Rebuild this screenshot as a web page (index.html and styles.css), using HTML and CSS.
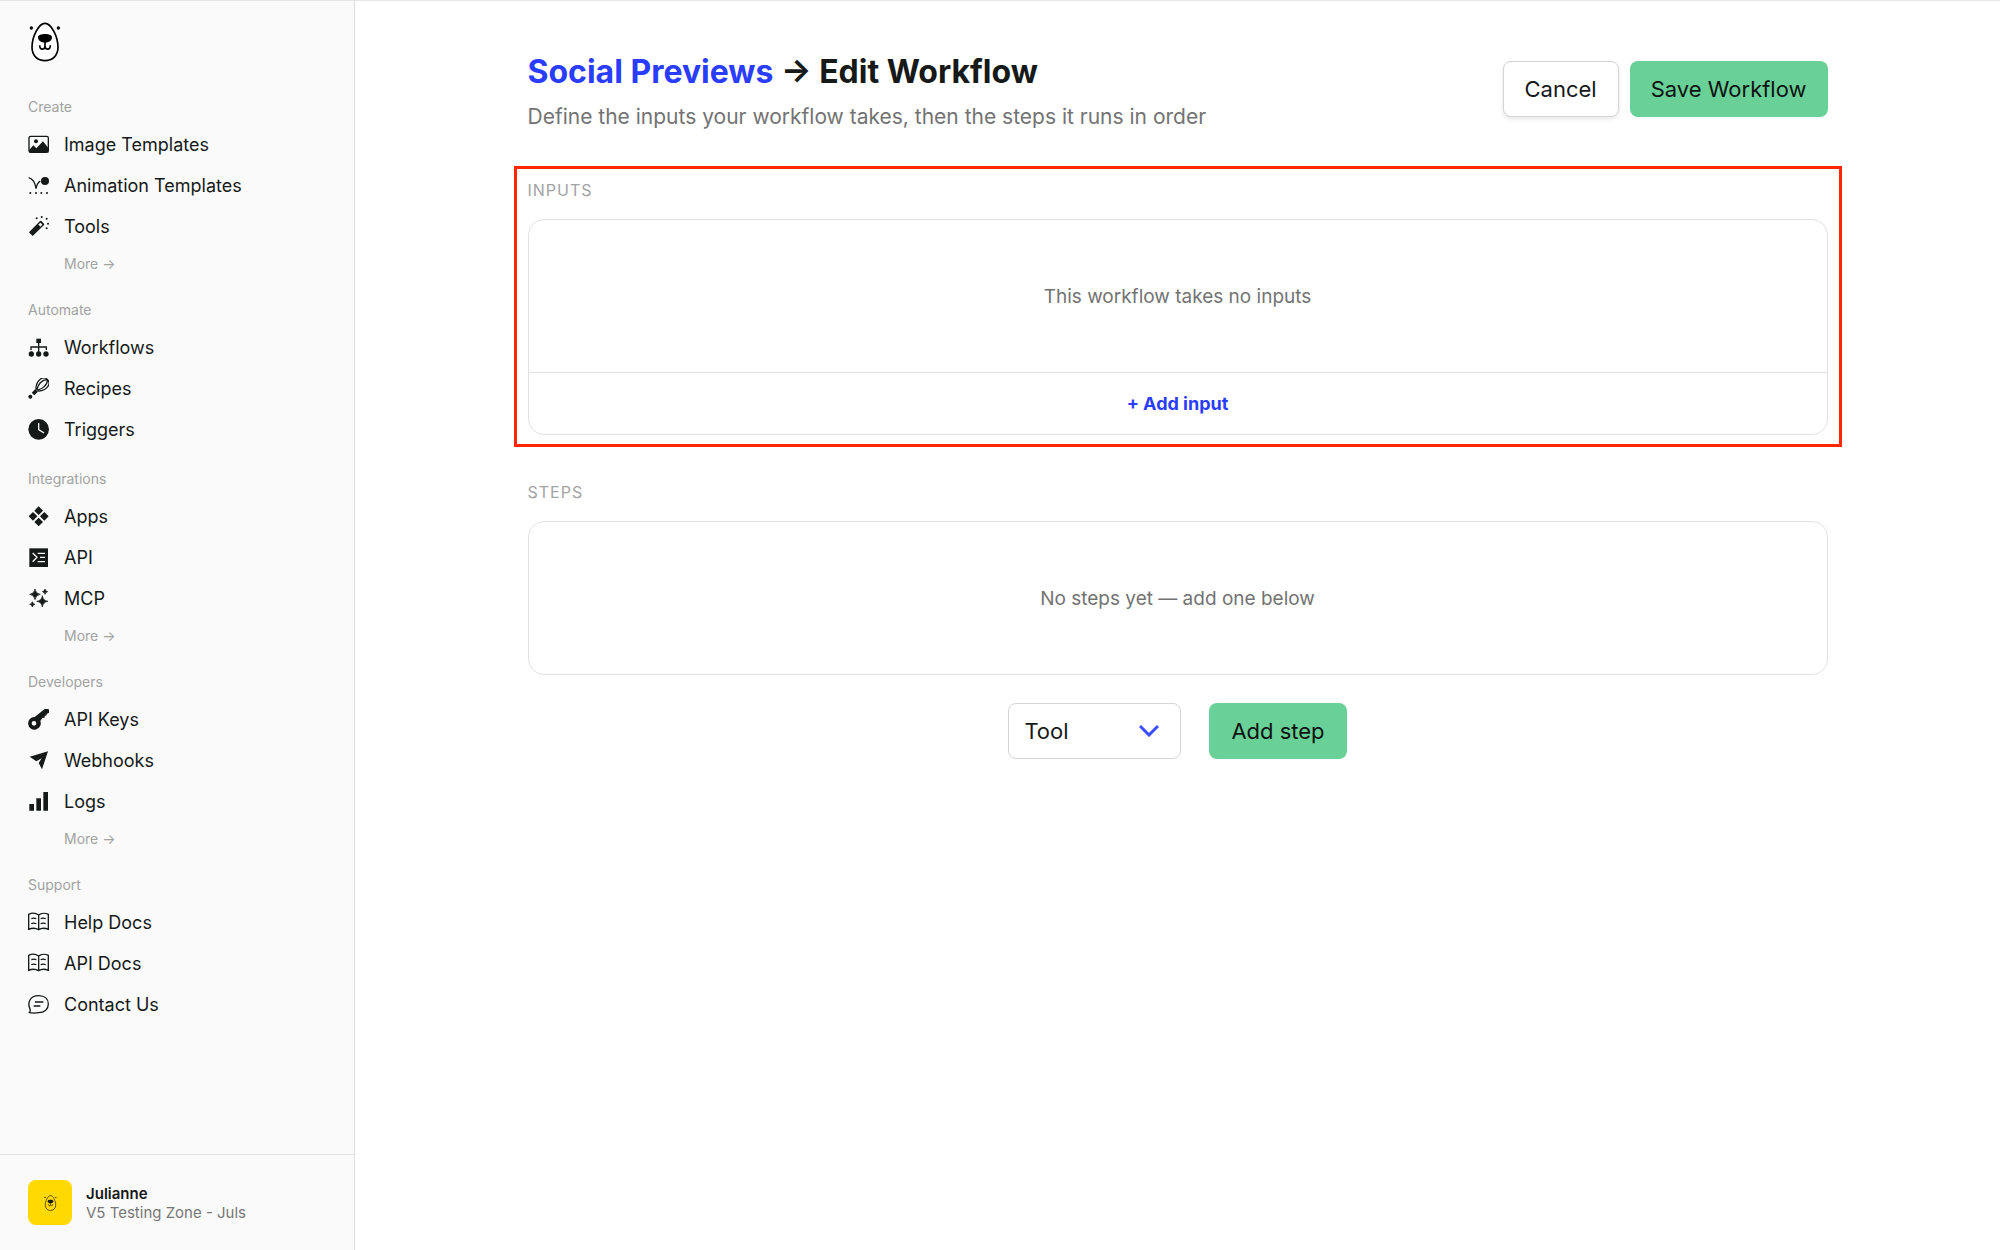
FILE: index.html
```html
<!DOCTYPE html>
<html lang="en">
<head>
<meta charset="utf-8">
<meta name="viewport" content="width=device-width, initial-scale=1">
<title>Edit Workflow</title>
<link rel="stylesheet" href="styles.css">
</head>
<body>
<svg class="defs" aria-hidden="true">
  <symbol id="bear" viewBox="0 0 96 120">
    <path d="M48 4C67 4 87 44 87 76C87 101 70 116 48 116C26 116 9 101 9 76C9 44 29 4 48 4Z" fill="#fff" fill-opacity="var(--face, 1)" stroke="currentColor" stroke-width="5"/>
    <circle cx="7" cy="18" r="5"/><circle cx="88" cy="18" r="5"/>
    <path d="M27 46C27 33 69 33 69 46C69 56 59 62 48 62C37 62 27 56 27 46Z"/>
    <path d="M48 60V72M32 70C32 86 48 84 48 72C48 84 64 86 64 70" fill="none" stroke="currentColor" stroke-width="5"/>
  </symbol>
  <symbol id="book" viewBox="0 0 63 63">
    <path d="M32 9C23 3 10 3 2 7V52C11 48 23 48 32 53C40 48 52 48 61 52V7C53 3 40 3 32 9ZM32 9V53M10 20Q17 17 25 20M10 35Q17 32 25 35M38 20Q46 17 53 20M38 35Q46 32 53 35" fill="none" stroke="currentColor" stroke-width="4"/>
  </symbol>
</svg>
<div class="app">
  <aside class="sidebar">
    <a class="logo" href="#" aria-label="Home"><svg><use href="#bear"/></svg></a>
    <nav class="nav">
      <section class="group">
        <h2>Create</h2>
        <a href="#"><svg viewBox="0 0 63 63"><rect x="3" y="7" width="58" height="48" rx="5" fill="none" stroke="currentColor" stroke-width="4"/><circle cx="24" cy="22" r="6"/><path d="M3 49L16 34L25 43L45 22L61 42V55H3Z"/></svg>Image Templates</a>
        <a href="#"><svg viewBox="0 0 63 63"><path d="M2 8Q20 13 24 41Q27 24 37 18" fill="none" stroke="currentColor" stroke-width="4"/><circle cx="51" cy="18" r="12"/><circle cx="7" cy="54" r="3"/><circle cx="24" cy="54" r="3"/><circle cx="40" cy="54" r="3"/><circle cx="57" cy="54" r="3"/></svg>Animation Templates</a>
        <a href="#"><svg viewBox="0 0 63 63"><path d="M3 49L36 15Q38 13 40 15L48 23Q50 25 48 27L14 60ZM31 25L37 32L43 26L38 20Z" fill-rule="evenodd"/><circle cx="26" cy="7" r="3"/><circle cx="41" cy="3" r="3"/><circle cx="56" cy="8" r="3"/><circle cx="60" cy="23" r="3"/><circle cx="56" cy="37" r="3"/></svg>Tools</a>
        <a class="more" href="#">More →</a>
      </section>
      <section class="group">
        <h2>Automate</h2>
        <a href="#"><svg viewBox="0 0 63 63"><path d="M25 5H39V18H25Z"/><path d="M32 17V45M9 39V30H55V39" fill="none" stroke="currentColor" stroke-width="4"/><circle cx="10" cy="51" r="8"/><circle cx="32" cy="51" r="8"/><circle cx="54" cy="51" r="8"/></svg>Workflows</a>
        <a href="#"><svg viewBox="0 0 63 63"><g transform="rotate(45 42 21)" fill="none" stroke="currentColor" stroke-width="4"><path d="M36 41C20 22 24 -2 42 -2C60 -2 64 22 48 41ZM42 -2C29 10 34 30 40 40M42 -2C55 10 50 30 44 40"/></g><path d="M26 37L15 48" stroke="currentColor" stroke-width="11"/><circle cx="7" cy="56" r="6"/></svg>Recipes</a>
        <a href="#"><svg viewBox="0 0 63 63"><circle cx="32" cy="31" r="31"/><path d="M32 12V32L48 42" fill="none" stroke="#fafafa" stroke-width="4"/></svg>Triggers</a>
      </section>
      <section class="group">
        <h2>Integrations</h2>
        <a href="#"><svg viewBox="0 0 63 63"><path d="M32 1L45 14L32 27L19 14ZM15 18L28 31L15 44L2 31ZM49 18L62 31L49 44L36 31ZM32 35L45 48L32 61L19 48Z"/></svg>Apps</a>
        <a href="#"><svg viewBox="0 0 63 63"><path d="M4 4H60V60H4Z"/><path d="M14 18L27 31L14 44M29 19H51M36 31H51M29 44H51" fill="none" stroke="#fafafa" stroke-width="4"/></svg>API</a>
        <a href="#"><svg viewBox="0 0 63 63"><path d="M21 3Q23 17 37 19Q23 21 21 35Q19 21 5 19Q19 17 21 3ZM43 23Q45 38 60 40Q45 42 43 57Q41 42 26 40Q41 38 43 23ZM51 3Q52 10 59 11Q52 12 51 19Q50 12 43 11Q50 10 51 3ZM13 41Q14 48 21 49Q14 50 13 57Q12 50 5 49Q12 48 13 41Z" stroke="currentColor" stroke-width="2"/></svg>MCP</a>
        <a class="more" href="#">More →</a>
      </section>
      <section class="group">
        <h2>Developers</h2>
        <a href="#"><svg viewBox="0 0 63 63"><path d="M20 24L49 1Q51 -1 54 0H60Q63 0 63 3V11L56 15V19L50 21V26L43 27L37 36A19 19 0 1 1 20 24ZM18 36A7 7 0 1 0 18 50A7 7 0 1 0 18 36Z" fill-rule="evenodd"/></svg>API Keys</a>
        <a href="#"><svg viewBox="0 0 63 63"><path d="M5 20L60 4L42 58L32 39L41 25L25 34Z"/></svg>Webhooks</a>
        <a href="#"><svg viewBox="0 0 63 63"><path d="M4 39H18V59H4ZM25 22H39V59H25ZM46 3H60V59H46Z"/></svg>Logs</a>
        <a class="more" href="#">More →</a>
      </section>
      <section class="group">
        <h2>Support</h2>
        <a href="#"><svg><use href="#book"/></svg>Help Docs</a>
        <a href="#"><svg><use href="#book"/></svg>API Docs</a>
        <a href="#"><svg viewBox="0 0 63 63"><path d="M6 45C-2 28 4 5 32 5C51 5 61 16 61 30C61 45 50 56 32 56C21 58 10 57 4 56Q8 52 6 45ZM21 24H46M17 36H37" fill="none" stroke="currentColor" stroke-width="4"/></svg>Contact Us</a>
      </section>
    </nav>
    <a class="account" href="#">
      <span class="avatar"><svg><use href="#bear"/></svg></span>
      <span class="who"><strong>Julianne</strong><span>V5 Testing Zone - Juls</span></span>
    </a>
  </aside>
  <main class="main">
    <form class="content">
      <header class="head">
        <div>
          <h1><a href="#">Social Previews</a> → Edit Workflow</h1>
          <p>Define the inputs your workflow takes, then the steps it runs in order</p>
        </div>
        <div class="actions">
          <button class="btn plain" type="button">Cancel</button>
          <button class="btn green" type="button">Save Workflow</button>
        </div>
      </header>
      <section class="block marked">
        <h2>INPUTS</h2>
        <div class="card">
          <p class="empty">This workflow takes no inputs</p>
          <button class="add" type="button">+ Add input</button>
        </div>
      </section>
      <section class="block">
        <h2>STEPS</h2>
        <div class="card">
          <p class="empty">No steps yet — add one below</p>
        </div>
      </section>
      <div class="adder">
        <div class="picker">
          <select aria-label="Step type"><option>Tool</option></select>
          <svg viewBox="0 0 20 12"><path d="M1 1L10 10L19 1" fill="none" stroke="#3b4eff" stroke-width="3"/></svg>
        </div>
        <button class="btn green" type="button">Add step</button>
      </div>
    </form>
  </main>
</div>
</body>
</html>
```
FILE: styles.css
```css
* { box-sizing: border-box; }
body, h1, h2, p { margin: 0; }
body {
  font-family: Inter, "Liberation Sans", sans-serif;
  color: #151918;
  background: #fff;
}
a { color: inherit; text-decoration: none; }
button, select { font: inherit; color: inherit; cursor: pointer; }
svg { fill: currentColor; }
.defs { display: none; }

.app {
  display: grid;
  grid-template-columns: 355px 1fr;
  min-height: 100vh;
  border-top: 1px solid #e6e6e6;
}

/* Sidebar */
.sidebar {
  display: flex;
  flex-direction: column;
  background: #fafafa;
  border-right: 1px solid #dcdcdc;
}
.logo { padding: 21px 28px 0 29px; color: #000; }
.logo svg { display: block; width: 32px; height: 40px; }
.nav {
  display: flex;
  flex-direction: column;
  gap: 11px;
  padding: 27px 28px 0;
}
.group h2 {
  font-size: 14px;
  font-weight: 400;
  line-height: 35px;
  color: #a3a3a3;
}
.group a {
  display: flex;
  align-items: center;
  gap: 15px;
  height: 41px;
  font-size: 18px;
}
.group svg { width: 21px; height: 21px; }
.group .more {
  height: 34px;
  padding: 0 0 2px 36px;
  font-size: 14px;
  color: #a3a3a3;
}
.account {
  display: flex;
  align-items: center;
  gap: 14px;
  margin-top: auto;
  padding: 25px 28px;
  border-top: 1px solid #dfdfdf;
}
.avatar {
  display: grid;
  place-items: center;
  width: 44px;
  height: 45px;
  border-radius: 8px;
  background: #ffd900;
  --face: 0;
}
.avatar svg { width: 13px; height: 16px; }
.who { display: grid; font-size: 15px; line-height: 19px; color: #777; }
.who strong { font-weight: 600; color: #151918; }

/* Main column */
.main { padding: 0 40px; }
.content { max-width: 1300px; margin: 0 auto; padding-top: 50px; }
.head {
  display: flex;
  justify-content: space-between;
  align-items: flex-start;
}
h1 { font-size: 32px; font-weight: 700; line-height: 42px; }
h1 a { color: #2a3dff; }
.head p { margin-top: 8px; font-size: 21px; line-height: 32px; color: #737373; }
.actions { display: flex; gap: 11px; padding-top: 10px; }
.btn {
  height: 56px;
  padding: 0 22px;
  border: 0;
  border-radius: 8px;
  font-size: 22px;
}
.actions .btn { padding: 0 21px; }
.plain {
  background: #fff;
  border: 1px solid #d4d4d8;
  box-shadow: 0 2px 4px rgba(0, 0, 0, 0.1);
}
.green { background: #69d097; color: #0d1210; }

.block { position: relative; margin-top: 47px; }
.block h2 {
  font-size: 16px;
  font-weight: 400;
  line-height: 20px;
  letter-spacing: 1px;
  color: #a3a3a3;
}
.card {
  margin-top: 19px;
  border: 1px solid #e2e2e2;
  border-radius: 16px;
  overflow: hidden;
}
.empty {
  padding-top: 2px;
  font-size: 19px;
  line-height: 150px;
  text-align: center;
  color: #737373;
}
.add {
  display: block;
  width: 100%;
  height: 62px;
  border: 0;
  border-top: 1px solid #e2e2e2;
  background: none;
  font-size: 18px;
  font-weight: 700;
  color: #2a3dff;
}

/* Highlight frame around the inputs section */
.marked::after {
  content: "";
  position: absolute;
  inset: -14px -14px -12px;
  border: 3px solid #ff2600;
  pointer-events: none;
}

.adder {
  display: flex;
  justify-content: center;
  gap: 28px;
  margin-top: 28px;
}
.picker { display: grid; align-items: center; width: 173px; }
.picker > * { grid-area: 1 / 1; }
.picker select {
  appearance: none;
  height: 56px;
  padding: 0 15px;
  border: 1px solid #d4d4d4;
  border-radius: 8px;
  background: #fff;
  font-size: 22px;
}
.picker svg {
  width: 20px;
  height: 12px;
  margin-right: 22px;
  justify-self: end;
  pointer-events: none;
}
```
